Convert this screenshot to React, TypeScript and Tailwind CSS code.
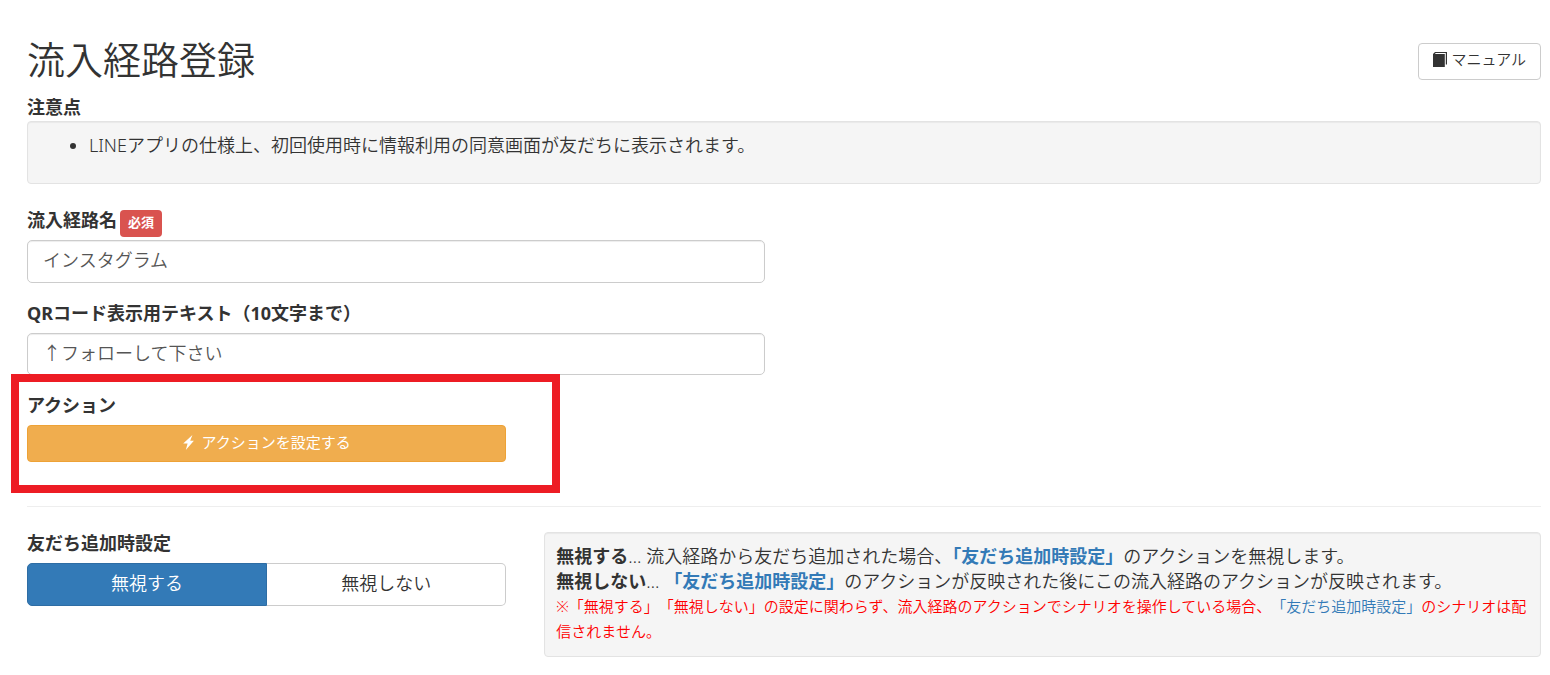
import { useState } from 'react';
import clsx from 'clsx';

function BookIcon() {
  return (
    <svg className="h-[15px] w-[14px] shrink-0" viewBox="0 0 14 15" fill="currentColor" aria-hidden="true">
      <path d="M2 0H14V12.5H12.8V1.1H2.8L1.8 2.1H11.8V15H0V2z" />
    </svg>
  );
}

function FlashIcon() {
  return (
    <svg className="h-[15px] w-[11px] shrink-0" viewBox="0 0 11 15" fill="currentColor" aria-hidden="true">
      <path d="M9.4 0 0.2 8.6H4.6L2.8 15 10.9 5.8H7.2z" />
    </svg>
  );
}

export default function App() {
  const [routeName, setRouteName] = useState('インスタグラム');
  const [qrText, setQrText] = useState('↑フォローして下さい');
  const [ignore, setIgnore] = useState(true);

  const labelClass = 'mb-[7px] block font-bold';
  const inputClass =
    'block w-full rounded-[5px] border border-[#ccc] bg-white px-[15px] pb-[5px] text-[#555] shadow-[inset_0_1px_1px_rgba(0,0,0,0.075)] outline-none focus:border-[#66afe9]';
  const wellClass =
    'rounded-[4px] border border-[#e3e3e3] bg-[#f5f5f5] shadow-[inset_0_1px_1px_rgba(0,0,0,0.05)]';

  return (
    <main
      lang="ja"
      className="bg-white pt-[35px] pr-[9px] pb-4 pl-[27px] font-['Noto_Sans','Noto_Sans_CJK_JP',sans-serif] text-[18px] leading-[25px] font-[350] text-[#333]"
    >
      <header className="flex items-start justify-between">
        <h1 className="text-[38px] leading-[48px]">流入経路登録</h1>
        <a
          href="#manual"
          className="mt-2 flex h-[37px] items-center gap-1 rounded-[4px] border border-[#ccc] bg-white px-[14px] pb-1 text-[15px] hover:bg-gray-100"
        >
          <BookIcon />
          マニュアル
        </a>
      </header>

      <h2 className="mt-3 mb-px font-bold">注意点</h2>
      <div className={clsx(wellClass, 'px-3 pt-[11px] pb-[25px]')}>
        <ul className="list-disc pl-[49px]">
          <li>LINEアプリの仕様上、初回使用時に情報利用の同意画面が友だちに表示されます。</li>
        </ul>
      </div>

      <form onSubmit={(e) => e.preventDefault()}>
        <div className="mt-6 grid grid-cols-2 gap-[38px]">
          <div>
            <div className="mb-[3px] flex items-start gap-[3px]">
              <label htmlFor="route-name" className="block font-bold">
                流入経路名
              </label>
              <span className="mt-0.5 h-[27px] rounded-[4px] bg-[#d9534f] px-2 text-[13px] font-bold text-white">必須</span>
            </div>
            <input
              id="route-name"
              type="text"
              value={routeName}
              onChange={(e) => setRouteName(e.target.value)}
              className={clsx(inputClass, 'h-[43px]')}
            />
            <label htmlFor="qr-text" className={clsx(labelClass, 'mt-[18px]')}>
              QRコード表示用テキスト（10文字まで）
            </label>
            <input
              id="qr-text"
              type="text"
              value={qrText}
              onChange={(e) => setQrText(e.target.value)}
              className={clsx(inputClass, 'h-[42px]')}
            />
          </div>
        </div>

        <div className="mt-[18px] grid grid-cols-3 gap-[38px]">
          <div className="relative">
            <h2 className={labelClass}>アクション</h2>
            <button
              type="button"
              className="flex h-[37px] w-full items-center justify-center gap-2 rounded-[4px] border border-[#eea236] bg-[#f0ad4e] pb-0.5 text-[15px] font-normal text-white hover:bg-[#ec971f]"
            >
              <FlashIcon />
              アクションを設定する
            </button>
            {/* Highlight frame around the action setting */}
            <div className="pointer-events-none absolute -top-[19px] -right-[54px] -bottom-[31px] -left-4 border-8 border-[#ed1c24]" />
          </div>
        </div>

        <hr className="mt-[44px] border-[#eee]" />

        <div className="mt-6 grid grid-cols-3 items-start gap-[38px]">
          <div>
            <h2 className={labelClass}>友だち追加時設定</h2>
            <div className="flex" role="group" aria-label="友だち追加時設定">
              <button
                type="button"
                aria-pressed={ignore}
                onClick={() => setIgnore(true)}
                className={clsx(
                  'h-[43px] flex-1 rounded-l-[5px] border pb-0.5',
                  ignore ? 'border-[#2e6da4] bg-[#337ab7] text-white' : 'border-[#ccc] bg-white'
                )}
              >
                無視する
              </button>
              <button
                type="button"
                aria-pressed={!ignore}
                onClick={() => setIgnore(false)}
                className={clsx(
                  'h-[43px] flex-1 rounded-r-[5px] border border-l-0 pb-0.5',
                  ignore ? 'border-[#ccc] bg-white' : 'border-[#2e6da4] bg-[#337ab7] text-white'
                )}
              >
                無視しない
              </button>
            </div>
          </div>

          <div className={clsx(wellClass, 'col-span-2 mt-px pt-[11px] pr-[7px] pb-3 pl-[11px]')}>
            <p>
              <b className="font-bold">無視する</b>… 流入経路から友だち追加された場合、
              <a href="#friend-setting" className="font-bold text-[#337ab7]">「友だち追加時設定」</a>
              のアクションを無視します。
            </p>
            <p>
              <b className="font-bold">無視しない</b>…{' '}
              <a href="#friend-setting" className="font-bold text-[#337ab7]">「友だち追加時設定」</a>
              のアクションが反映された後にこの流入経路のアクションが反映されます。
            </p>
            <p className="text-[15px] text-[#f00] [text-spacing-trim:space-all]">
              ※「無視する」「無視しない」の設定に関わらず、流入経路のアクションでシナリオを操作している場合、
              <a href="#friend-setting" className="text-[#337ab7]">「友だち追加時設定」</a>
              のシナリオは配信されません。
            </p>
          </div>
        </div>
      </form>
    </main>
  );
}
